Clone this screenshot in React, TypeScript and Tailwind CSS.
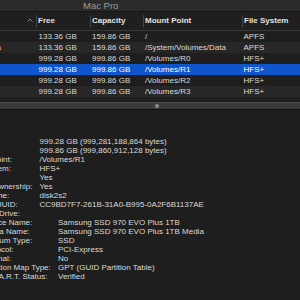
import React from 'react';

const font = { fontFamily: '"Liberation Sans", Arial, sans-serif' };

interface Volume {
  name: string;
  free: string;
  capacity: string;
  mount: string;
  fs: string;
  selected?: boolean;
}

const volumes: Volume[] = [
  { name: 'Macintosh HD', free: '133.36 GB', capacity: '159.86 GB', mount: '/', fs: 'APFS' },
  { name: 'Macintosh HD - Data', free: '133.36 GB', capacity: '159.86 GB', mount: '/System/Volumes/Data', fs: 'APFS' },
  { name: 'R0', free: '999.28 GB', capacity: '999.86 GB', mount: '/Volumes/R0', fs: 'HFS+' },
  { name: 'R1', free: '999.28 GB', capacity: '999.86 GB', mount: '/Volumes/R1', fs: 'HFS+', selected: true },
  { name: 'R2', free: '999.28 GB', capacity: '999.86 GB', mount: '/Volumes/R2', fs: 'HFS+' },
  { name: 'R3', free: '999.28 GB', capacity: '999.86 GB', mount: '/Volumes/R3', fs: 'HFS+' },
];

const volumeInfo: [string, string][] = [
  ['Free:', '999.28 GB (999,281,188,864 bytes)'],
  ['Capacity:', '999.86 GB (999,860,912,128 bytes)'],
  ['Mount Point:', '/Volumes/R1'],
  ['File System:', 'HFS+'],
  ['Writable:', 'Yes'],
  ['Ignore Ownership:', 'Yes'],
  ['BSD Name:', 'disk2s2'],
  ['Volume UUID:', 'CC9BD7F7-261B-31A0-B995-0A2F6B1137AE'],
  ['Physical Drive:', ''],
];

const driveInfo: [string, string][] = [
  ['Device Name:', 'Samsung SSD 970 EVO Plus 1TB'],
  ['Media Name:', 'Samsung SSD 970 EVO Plus 1TB Media'],
  ['Medium Type:', 'SSD'],
  ['Protocol:', 'PCI-Express'],
  ['Internal:', 'No'],
  ['Partition Map Type:', 'GPT (GUID Partition Table)'],
  ['S.M.A.R.T. Status:', 'Verified'],
];

function HeaderCell({ label, width, sep = true }: { label: string; width: string; sep?: boolean }) {
  return (
    <div className={`${width} shrink-0 h-full flex items-center relative pl-[2px]`}>
      {sep && <span className="absolute left-0 top-[3px] bottom-[3px] w-px bg-[#444444]" />}
      <span className="font-bold text-[#e2e2e2] whitespace-nowrap">{label}</span>
    </div>
  );
}

function InfoRows({ rows, labelWidth, indent }: { rows: [string, string][]; labelWidth: string; indent: string }) {
  return (
    <div className={indent}>
      {rows.map(([label, value]) => (
        <div key={label} className="flex h-[9px] items-center whitespace-nowrap">
          <span className={`${labelWidth} shrink-0`}>{label}</span>
          <span>{value}</span>
        </div>
      ))}
    </div>
  );
}

export default function App() {
  return (
    <div
      className="w-[300px] h-[300px] overflow-hidden bg-[#1e1e1e] text-[8px] leading-none text-[#dadada] flex flex-col"
      style={font}
    >
      {/* title bar */}
      <div className="h-[12px] shrink-0 bg-[#2b2b2b] flex items-center border-b border-[#141414]">
        <span className="ml-[83px] text-[9.5px] text-[#9b9b9b]">Mac Pro</span>
      </div>

      {/* table header */}
      <div className="h-[19px] shrink-0 flex items-center bg-[#1f1f1f] border-b border-[#3a3a3a] -ml-[40px]">
        <div className="w-[76px] shrink-0 h-full flex items-center justify-between pr-[3px]">
          <span className="font-bold text-[#e2e2e2]">Name</span>
          <svg width="6" height="4" viewBox="0 0 6 4" className="mb-[2px]">
            <path d="M0.5 3.5L3 1L5.5 3.5" fill="none" stroke="#8a8a8a" strokeWidth="0.9" />
          </svg>
        </div>
        <HeaderCell label="Free" width="w-[54px]" />
        <HeaderCell label="Capacity" width="w-[53px]" />
        <HeaderCell label="Mount Point" width="w-[99px]" />
        <HeaderCell label="File System" width="w-[80px]" />
      </div>

      {/* table rows */}
      <div className="h-[71px] shrink-0 flex flex-col overflow-hidden">
        {volumes.map((v, i) => (
          <div
            key={v.mount}
            className={`h-[11px] shrink-0 flex items-center -ml-[40px] ${
              v.selected ? 'bg-[#0f56cc] text-white' : i % 2 === 0 ? 'bg-[#1e1e1e]' : 'bg-[#272727]'
            }`}
          >
            <span className={`w-[76px] shrink-0 whitespace-nowrap text-right pr-[35px] ${i === 1 ? '' : 'invisible'}`}>
              {i === 1 ? 'Data' : v.name}
            </span>
            <span className="w-[54px] shrink-0 pl-[2.5px]">{v.free}</span>
            <span className="w-[53px] shrink-0 pl-[2px]">{v.capacity}</span>
            <span className="w-[99px] shrink-0 pl-[2px]">{v.mount}</span>
            <span className="w-[80px] shrink-0 pl-[1.5px]">{v.fs}</span>
          </div>
        ))}
        <div className="flex-1 bg-[#1e1e1e]" />
      </div>

      {/* split view divider */}
      <div className="h-[8px] shrink-0 bg-[#3a3a3a] border-t border-[#4a4a4a] border-b border-b-[#111111] flex items-center">
        <span className="ml-[155px] w-[4px] h-[4px] rounded-full bg-[#8c8c8c]" />
      </div>

      {/* details */}
      <div className="flex-1 pt-[27px]">
        <InfoRows rows={volumeInfo} labelWidth="w-[72.5px]" indent="-ml-[33px]" />
        <InfoRows rows={driveInfo} labelWidth="w-[76px]" indent="-ml-[18px]" />
      </div>
    </div>
  );
}
